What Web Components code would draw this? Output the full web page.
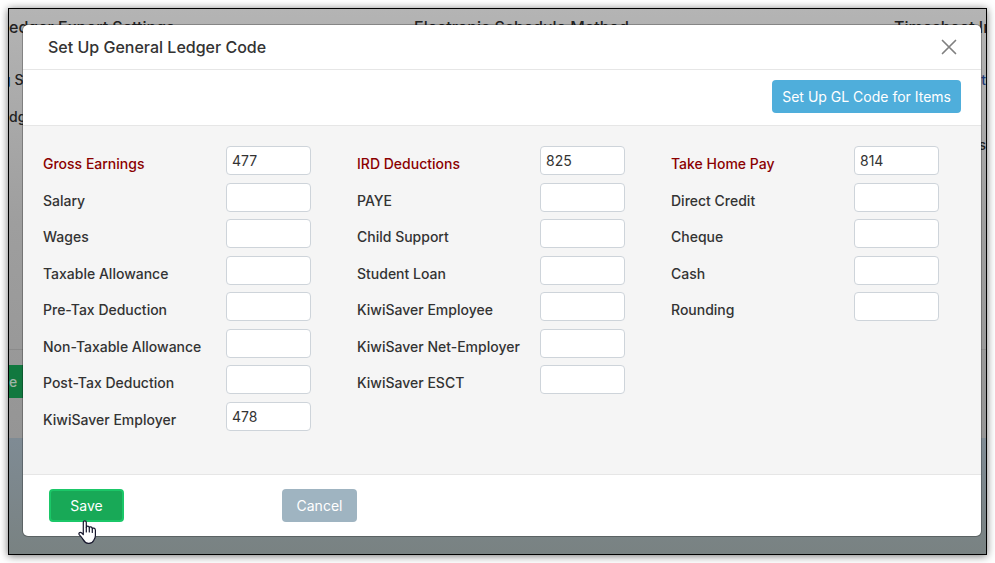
<!DOCTYPE html>
<html lang="en">
<head>
<meta charset="utf-8">
<meta name="viewport" content="width=device-width, initial-scale=1">
<title>Set Up General Ledger Code</title>
<style>
  body {
    margin: 0;
    min-height: 100vh;
    display: flex;
    background: #ffffff;
    color: #333333;
    font-family: Inter, "Liberation Sans", sans-serif;
    font-size: 14px;
  }
</style>
</head>
<body>
<payroll-app></payroll-app>

<script>
class SettingsPage extends HTMLElement {
  constructor() {
    super();
    this.attachShadow({ mode: 'open' }).innerHTML = `
    <style>
      :host {
        display: flex;
        flex-direction: column;
        flex: 1;
        min-width: 0;
        overflow: hidden;
        color: #222222;
        font-size: 14px;
        font-weight: 500;
        line-height: 20px;
        white-space: nowrap;
      }

      .settings {
        display: flex;
        flex-direction: column;
        flex: 1;
        background: linear-gradient(#b4b4b4, #9e9e9e 50%, #959595);
      }

      .columns {
        display: grid;
        grid-template-columns: minmax(0, 405fr) minmax(0, 480fr) minmax(0, 92fr);
        padding-top: 8px;
        flex: 1;
      }

      h2 {
        margin: 0;
        font-size: 16px;
        font-weight: 500;
        line-height: 20px;
      }

      .column {
        display: flex;
        flex-direction: column;
      }

      p {
        margin: 0;
      }

      .first {
        margin-top: 33px;
      }

      .second {
        margin-top: 17px;
      }

      .third {
        margin-top: 45px;
      }

      /* rows that run past the edges of the view */
      .cut-left {
        margin-left: -7px;
      }

      .cut-right {
        align-self: flex-end;
        margin-right: -8px;
      }

      .end {
        align-self: flex-end;
      }

      a {
        color: #1d3a78;
        text-decoration: none;
      }

      .actions {
        display: flex;
        padding: 15px 0 40px;
        border-top: 1px solid #8b8b8b;
      }

      button {
        height: 33px;
        padding: 0 18px 0 0;
        border: 0;
        background: #11783f;
        color: #9fb5a8;
        font: inherit;
      }

      .footer {
        height: 116px;
        background: linear-gradient(#7f8b94, #798282);
      }
    </style>

    <div class="settings">
      <div class="columns">
        <div class="column">
          <h2>edger Export Settings</h2>
          <p class="first cut-left"><a href="#">g</a> S</p>
          <p class="second">dg</p>
        </div>
        <div class="column">
          <h2>Electronic Schedule Method</h2>
        </div>
        <div class="column">
          <h2>Timesheet In</h2>
          <p class="first cut-right"><a href="#">ta</a></p>
          <p class="third end">s</p>
        </div>
      </div>
      <div class="actions"><button type="button">e</button></div>
    </div>
    <div class="footer"></div>
  `;
  }
}

class ModalDialog extends HTMLElement {
  constructor() {
    super();
    this.attachShadow({ mode: 'open' }).innerHTML = `
    <style>
      :host {
        display: block;
        border-radius: 5px;
        background: #ffffff;
        box-shadow: 0 0 0 1px rgba(0, 0, 0, 0.25);
      }

      header {
        display: flex;
        align-items: center;
        justify-content: space-between;
        height: 44px;
        padding: 0 24px 0 25px;
        border-bottom: 1px solid #e6e6e6;
      }

      h1 {
        margin: 0;
        font-size: 16px;
        font-weight: 500;
      }

      .close {
        display: flex;
        padding: 0;
        border: 0;
        background: none;
        color: #808080;
      }

      .toolbar {
        display: flex;
        justify-content: flex-end;
        padding: 10px 20px 12px;
        border-bottom: 1px solid #e6e6e6;
      }

      main {
        display: flex;
        gap: 46px;
        align-items: flex-start;
        padding: 20px 42px 36px 20px;
        background: #f5f5f5;
      }

      footer {
        display: flex;
        gap: 158px;
        padding: 14px 26px;
        border-top: 1px solid #e6e6e6;
      }
    </style>

    <header>
      <h1><slot name="title"></slot></h1>
      <button class="close" type="button" aria-label="Close">
        <svg width="16" height="16" viewBox="0 0 16 16" fill="none"
          stroke="currentColor" stroke-width="1.7" stroke-linecap="round">
          <path d="M1.5 1.5 14.5 14.5M14.5 1.5 1.5 14.5"/>
        </svg>
      </button>
    </header>
    <div class="toolbar"><slot name="toolbar"></slot></div>
    <main><slot></slot></main>
    <footer><slot name="footer"></slot></footer>
  `;
  }
}

class LedgerGroup extends HTMLElement {
  constructor() {
    super();
    this.attachShadow({ mode: 'open' }).innerHTML = `
    <style>
      :host {
        display: grid;
        flex: 1;
        /* shared row track for all groups, eight rows deep */
        grid-template-rows: repeat(8, 1fr);
        min-height: 292px;
      }
    </style>

    <slot></slot>
  `;
  }
}

class LedgerField extends HTMLElement {
  connectedCallback() {
    const shadow = this.attachShadow({ mode: 'open' });

    shadow.innerHTML = `
    <style>
      :host {
        display: flex;
        align-items: flex-start;
        color: #333333;
      }

      :host([total]) {
        color: #8b0000;
      }

      label {
        flex: 1;
        padding-top: 8px;
        font-weight: 500;
        line-height: 20px;
        white-space: nowrap;
      }

      input {
        box-sizing: border-box;
        width: 85px;
        height: 29px;
        padding: 0 5px;
        border: 1px solid #ced4da;
        border-radius: 4px;
        background: #ffffff;
        color: #333333;
        font: inherit;
      }
    </style>

    <label for="code"></label>
    <input id="code" type="text">
  `;

    shadow.querySelector('label').textContent = this.getAttribute('label');
    shadow.querySelector('input').value = this.getAttribute('value') ?? '';
  }
}

class ActionButton extends HTMLElement {
  constructor() {
    super();
    this.attachShadow({ mode: 'open' }).innerHTML = `
    <style>
      :host {
        display: inline-flex;
        position: relative;
      }

      button {
        min-width: 75px;
        height: 33px;
        padding: 0 10px;
        border: 0;
        border-radius: 4px;
        background: #4faedb;
        color: #ffffff;
        font: inherit;
      }

      :host([kind='save']) button {
        border: 2px solid #1bc768;
        background: #18a957;
      }

      :host([kind='cancel']) button {
        background: #9fb4c1;
      }
    </style>

    <button type="button"><slot></slot></button>
    <slot name="pointer"></slot>
  `;
  }
}

class HandPointer extends HTMLElement {
  constructor() {
    super();
    this.attachShadow({ mode: 'open' }).innerHTML = `
    <style>
      :host {
        position: absolute;
        top: 31px;
        left: 29px;
        pointer-events: none;
      }

      svg {
        display: block;
      }
    </style>

    <svg width="19" height="25" viewBox="0 0 19 25" fill="#ffffff"
      stroke="#16162c" stroke-width="1.2" stroke-linejoin="round" stroke-linecap="round">
      <path d="M5.3 14.5V2.6C5.3 .2 8.3 .2 8.3 2.6V7.6C8.5 5.5 11.3 5.7 11.3 7.8C11.5 6.4 14.3 6.6 14.3 8.8C14.7 7.6 17.4 7.8 17.4 10.2V15.5C17.4 18 16.2 19.2 15.8 20.3C14.8 22.6 12.5 23.6 10.3 23.4C7.6 23.2 6.3 21.6 5.2 19.6C4.2 17.8 2.9 16.4 1.4 14.8C.1 13.2 1.9 11.6 3.5 12.8Z"/>
      <path d="M8.3 7.6V12M11.3 7.8V12M14.3 8.8V12.4"/>
    </svg>
  `;
  }
}

class PayrollApp extends HTMLElement {
  constructor() {
    super();
    this.attachShadow({ mode: 'open' }).innerHTML = `
    <style>
      :host {
        display: flex;
        flex: 1;
        position: relative;
        margin: 8px;
        border: 1px solid #000000;
        box-shadow: 0 1px 8px rgba(0, 0, 0, 0.55);
      }

      modal-dialog {
        position: absolute;
        top: 16px;
        left: 14px;
        right: 5px;
      }
    </style>

    <settings-page></settings-page>

    <modal-dialog role="dialog" aria-label="Set Up General Ledger Code">
      <span slot="title">Set Up General Ledger Code</span>
      <action-button slot="toolbar">Set Up GL Code for Items</action-button>

      <ledger-group>
        <ledger-field total label="Gross Earnings" value="477"></ledger-field>
        <ledger-field label="Salary"></ledger-field>
        <ledger-field label="Wages"></ledger-field>
        <ledger-field label="Taxable Allowance"></ledger-field>
        <ledger-field label="Pre-Tax Deduction"></ledger-field>
        <ledger-field label="Non-Taxable Allowance"></ledger-field>
        <ledger-field label="Post-Tax Deduction"></ledger-field>
        <ledger-field label="KiwiSaver Employer" value="478"></ledger-field>
      </ledger-group>

      <ledger-group>
        <ledger-field total label="IRD Deductions" value="825"></ledger-field>
        <ledger-field label="PAYE"></ledger-field>
        <ledger-field label="Child Support"></ledger-field>
        <ledger-field label="Student Loan"></ledger-field>
        <ledger-field label="KiwiSaver Employee"></ledger-field>
        <ledger-field label="KiwiSaver Net-Employer"></ledger-field>
        <ledger-field label="KiwiSaver ESCT"></ledger-field>
      </ledger-group>

      <ledger-group>
        <ledger-field total label="Take Home Pay" value="814"></ledger-field>
        <ledger-field label="Direct Credit"></ledger-field>
        <ledger-field label="Cheque"></ledger-field>
        <ledger-field label="Cash"></ledger-field>
        <ledger-field label="Rounding"></ledger-field>
      </ledger-group>

      <action-button slot="footer" kind="save">Save<hand-pointer slot="pointer"></hand-pointer></action-button>
      <action-button slot="footer" kind="cancel">Cancel</action-button>
    </modal-dialog>
  `;
  }
}

customElements.define('settings-page', SettingsPage);
customElements.define('modal-dialog', ModalDialog);
customElements.define('ledger-group', LedgerGroup);
customElements.define('ledger-field', LedgerField);
customElements.define('action-button', ActionButton);
customElements.define('hand-pointer', HandPointer);
customElements.define('payroll-app', PayrollApp);
</script>
</body>
</html>
